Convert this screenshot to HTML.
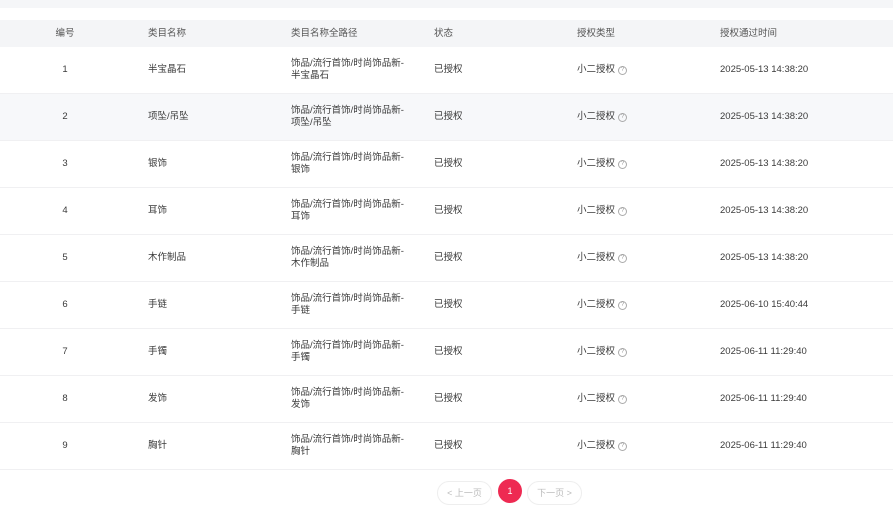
<!DOCTYPE html>
<html><head><meta charset="utf-8"><style>
*{margin:0;padding:0;box-sizing:border-box}
body{width:893px;height:504px;overflow:hidden;background:#fff;font-family:"Liberation Sans","Noto Sans CJK SC",sans-serif;font-size:9.5px;color:#3a3a3a}
.top{position:absolute;left:0;top:0;width:893px;height:8px;background:#f5f6f8}
.hdr{position:absolute;left:0;top:20px;width:893px;height:27px;background:#f4f5f7;color:#555}
.row{position:absolute;left:0;width:893px;height:47px;border-bottom:1px solid #f0f0f2}
.c{position:absolute;top:50%;transform:translateY(-50%);line-height:12px;white-space:nowrap}
.c1{left:65px;transform:translate(-50%,-50%)}
.c2{left:148px}.c3{left:291px}.c4{left:434px}.c5{left:577px;display:flex;align-items:center}.c6{left:720px}
.q{display:inline-flex;align-items:center;justify-content:center;width:9px;height:9px;border:1px solid #aaa;border-radius:50%;font-size:6px;color:#999;margin-left:3px}
.pg{position:absolute;top:481px;height:24px;border:1px solid #eee;border-radius:12px;color:#bbb;font-size:9px;line-height:22px;text-align:center}
.cur{position:absolute;left:498px;top:479px;width:24px;height:24px;border-radius:50%;background:#ee2a52;color:#fff;text-align:center;line-height:24px;font-size:9px}
</style></head><body>
<div class="top"></div>
<div class="hdr"><span class="c c1">编号</span><span class="c c2">类目名称</span><span class="c c3">类目名称全路径</span><span class="c c4">状态</span><span class="c c5">授权类型</span><span class="c c6">授权通过时间</span></div>
<div class="row" style="top:47px"><span class="c c1">1</span><span class="c c2">半宝晶石</span><span class="c c3">饰品/流行首饰/时尚饰品新-<br>半宝晶石</span><span class="c c4">已授权</span><span class="c c5">小二授权<span class="q">?</span></span><span class="c c6">2025-05-13 14:38:20</span></div>
<div class="row" style="top:94px;background:#f7f8fa"><span class="c c1">2</span><span class="c c2">项坠/吊坠</span><span class="c c3">饰品/流行首饰/时尚饰品新-<br>项坠/吊坠</span><span class="c c4">已授权</span><span class="c c5">小二授权<span class="q">?</span></span><span class="c c6">2025-05-13 14:38:20</span></div>
<div class="row" style="top:141px"><span class="c c1">3</span><span class="c c2">银饰</span><span class="c c3">饰品/流行首饰/时尚饰品新-<br>银饰</span><span class="c c4">已授权</span><span class="c c5">小二授权<span class="q">?</span></span><span class="c c6">2025-05-13 14:38:20</span></div>
<div class="row" style="top:188px"><span class="c c1">4</span><span class="c c2">耳饰</span><span class="c c3">饰品/流行首饰/时尚饰品新-<br>耳饰</span><span class="c c4">已授权</span><span class="c c5">小二授权<span class="q">?</span></span><span class="c c6">2025-05-13 14:38:20</span></div>
<div class="row" style="top:235px"><span class="c c1">5</span><span class="c c2">木作制品</span><span class="c c3">饰品/流行首饰/时尚饰品新-<br>木作制品</span><span class="c c4">已授权</span><span class="c c5">小二授权<span class="q">?</span></span><span class="c c6">2025-05-13 14:38:20</span></div>
<div class="row" style="top:282px"><span class="c c1">6</span><span class="c c2">手链</span><span class="c c3">饰品/流行首饰/时尚饰品新-<br>手链</span><span class="c c4">已授权</span><span class="c c5">小二授权<span class="q">?</span></span><span class="c c6">2025-06-10 15:40:44</span></div>
<div class="row" style="top:329px"><span class="c c1">7</span><span class="c c2">手镯</span><span class="c c3">饰品/流行首饰/时尚饰品新-<br>手镯</span><span class="c c4">已授权</span><span class="c c5">小二授权<span class="q">?</span></span><span class="c c6">2025-06-11 11:29:40</span></div>
<div class="row" style="top:376px"><span class="c c1">8</span><span class="c c2">发饰</span><span class="c c3">饰品/流行首饰/时尚饰品新-<br>发饰</span><span class="c c4">已授权</span><span class="c c5">小二授权<span class="q">?</span></span><span class="c c6">2025-06-11 11:29:40</span></div>
<div class="row" style="top:423px"><span class="c c1">9</span><span class="c c2">胸针</span><span class="c c3">饰品/流行首饰/时尚饰品新-<br>胸针</span><span class="c c4">已授权</span><span class="c c5">小二授权<span class="q">?</span></span><span class="c c6">2025-06-11 11:29:40</span></div>
<div class="pg" style="left:437px;width:55px">&lt; 上一页</div>
<div class="cur">1</div>
<div class="pg" style="left:527px;width:55px">下一页 &gt;</div>
</body></html>
